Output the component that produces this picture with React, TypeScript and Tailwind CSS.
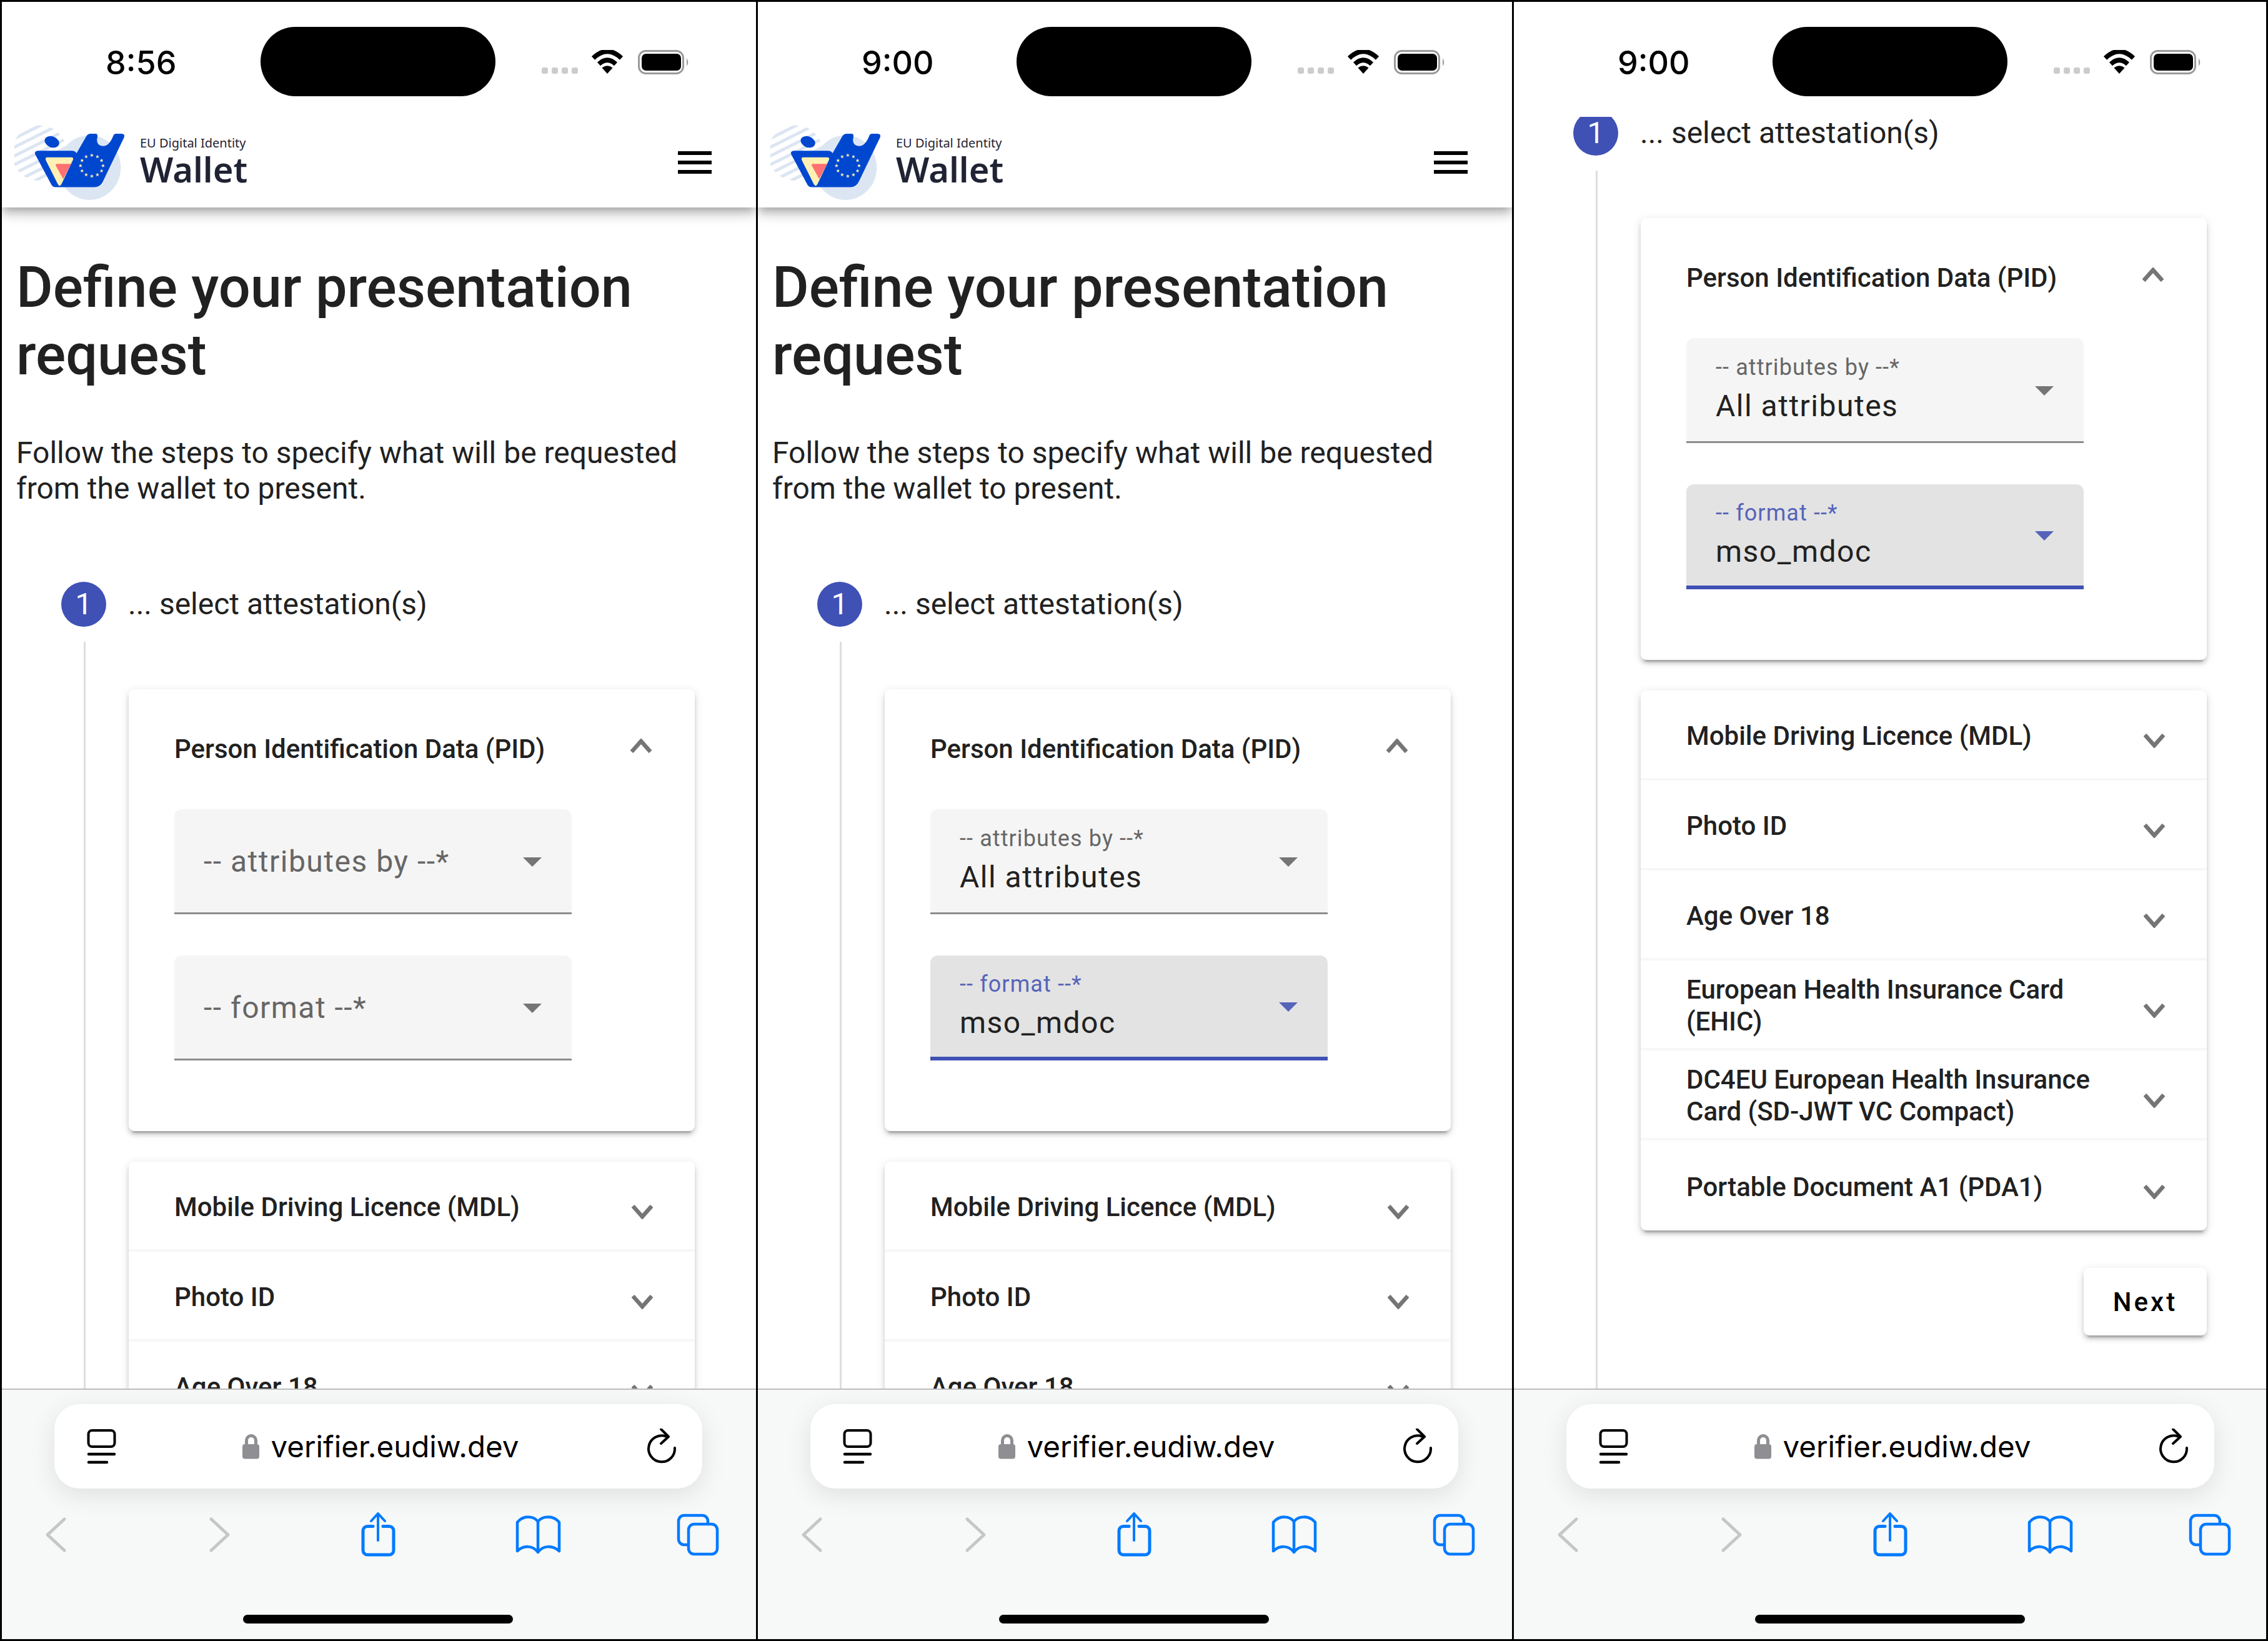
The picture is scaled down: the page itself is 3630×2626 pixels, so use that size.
import React from "react";

const stripes = [0, 1, 2, 3, 4, 5, 6, 7];

function starPoints(cx: number, cy: number, r: number) {
  const pts: string[] = [];
  for (let i = 0; i < 10; i++) {
    const rad = i % 2 === 0 ? r : r * 0.42;
    const a = -Math.PI / 2 + (i * Math.PI) / 5;
    pts.push(`${(cx + rad * Math.cos(a)).toFixed(1)},${(cy + rad * Math.sin(a)).toFixed(1)}`);
  }
  return pts.join(" ");
}

function Logo() {
  const id = React.useId();
  return (
    <svg width="177" height="122" viewBox="70 85 530 365" className="flex-none">
      <defs>
        <clipPath id={id}>
          <circle cx="190" cy="225" r="133" />
        </clipPath>
      </defs>
      <g clipPath={`url(#${id})`} stroke="#dce5f2" strokeWidth="15">
        {stripes.map((i) => (
          <line key={i} x1="40" x2="340" y1={170 + i * 42} y2={20 + i * 42} />
        ))}
      </g>
      <ellipse cx="430" cy="295" rx="150" ry="155" fill="#dce6f3" />
      <ellipse cx="250" cy="172" rx="36" ry="26" transform="rotate(22 250 172)" fill="#0047d0" />
      <path
        d="M182 214 H345 Q362 214 368 226 L415 145 Q422 133 436 133 H462 Q472 135 466 160 Q464 190 495 192 Q525 192 545 140 Q548 133 558 133 H585 Q602 135 595 152 L495 360 Q482 389 452 389 H268 Q252 389 245 372 L170 232 Q164 216 182 214 Z"
        fill="#0047d0"
      />
      <path d="M228 246 H342 Q356 246 350 260 L296 374 Q287 390 278 374 L222 262 Q215 246 228 246 Z" fill="#fff0b3" />
      <path d="M275 277 H342 L304 350 L268 285 Q266 277 275 277 Z" fill="#ff7072" />
      {Array.from({ length: 12 }).map((_, i) => {
        const a = (i * Math.PI) / 6;
        return <polygon key={i} points={starPoints(441 + 54 * Math.cos(a), 286 + 50 * Math.sin(a), 9.5)} fill="#fff0b3" />;
      })}
    </svg>
  );
}

function StatusIcons() {
  return (
    <div className="flex items-start ml-[74px] h-[111px]">
      <div className="flex gap-[6px] mt-[65px]">
        {[0, 1, 2, 3].map((i) => (
          <div key={i} className="w-[10px] h-[10px] rounded-[3px] bg-[#cccccc]" />
        ))}
      </div>
      <svg width="54" height="40" viewBox="945 80 54 40" className="ml-[20px] mt-[37px]">
        <path d="M949.5 93 Q972 71.5 994.5 93" fill="none" stroke="#000" strokeWidth="7.5" />
        <path d="M958.5 102.5 Q972 90 985.5 102.5" fill="none" stroke="#000" strokeWidth="7.5" />
        <path d="M972 118 L963.5 108.5 Q972 102 980.5 108.5 Z" fill="#000" />
      </svg>
      <svg width="84" height="42" viewBox="1019 79 84 42" className="ml-[21px] mt-[36px]">
        <rect x="1021.5" y="81.5" width="71" height="36" rx="11" fill="none" stroke="#9a9a9a" strokeWidth="3" />
        <rect x="1026" y="86" width="63" height="27" rx="7" fill="#000" />
        <path d="M1098 93 Q1102.500 99.500 1098 106 Z" fill="#9a9a9a" />
      </svg>
    </div>
  );
}

function StatusBar({ time }: { time: string }) {
  return (
    <div className="flex-none h-[184px] bg-white flex items-start pt-[40px] pl-[166px] relative z-20">
      <div className="w-[248px] h-[111px] flex items-center pt-[4px] font-[Inter,sans-serif] font-medium text-[52px] leading-none text-black">
        {time}
      </div>
      <div className="w-[376px] h-[111px] rounded-[56px] bg-black" />
      <StatusIcons />
    </div>
  );
}

function AppHeader() {
  return (
    <div className="flex-none h-[145px] bg-white flex items-start pl-[20px] pr-[71px] relative z-10 shadow-[0_6px_12px_-3px_rgba(0,0,0,0.2),0_12px_15px_0_rgba(0,0,0,0.14),0_3px_30px_0_rgba(0,0,0,0.12)]">
      <div className="mt-[11px]">
        <Logo />
      </div>
      <div className="ml-[24px] mt-[30px] flex flex-col text-[#1f2333] font-['Noto_Sans',sans-serif]">
        <span className="text-[20px] leading-[24px] whitespace-nowrap">EU Digital Identity</span>
        <span className="text-[56px] leading-[60px] font-semibold -mt-[1px]">Wallet</span>
      </div>
      <div className="ml-auto mt-[55px] flex flex-col gap-[9px]">
        <div className="w-[54px] h-[6px] bg-black" />
        <div className="w-[54px] h-[6px] bg-black" />
        <div className="w-[54px] h-[6px] bg-black" />
      </div>
    </div>
  );
}

function Chevron({ up }: { up?: boolean }) {
  return (
    <svg width="34" height="23" viewBox="0 0 34 23" className="flex-none">
      <polyline
        points={up ? "2,21 17,4 32,21" : "2,2 17,19 32,2"}
        fill="none"
        stroke="#757575"
        strokeWidth="6.500"
      />
    </svg>
  );
}

function Caret({ focused }: { focused?: boolean }) {
  return (
    <svg width="30" height="15" viewBox="0 0 30 15" className="flex-none mt-[3px]">
      <polygon points="0,0 30,0 15,15" fill={focused ? "#5564b9" : "#757575"} />
    </svg>
  );
}

function SelectField({ label, value, focused }: { label: string; value?: string; focused?: boolean }) {
  const box = focused ? "bg-[#e3e3e3] border-b-[6px] border-[#3f51b5]" : "bg-[#f5f5f5] border-b-[3px] border-[#8c8c8c]";
  return (
    <div className={`w-[636px] h-[168px] rounded-t-[12px] flex items-center justify-between pl-[47px] pr-[48px] ${box}`}>
      {value ? (
        <div className="flex flex-col gap-[9px]">
          <span className={`text-[36px] leading-[44px] tracking-[1.1px] ${focused ? "text-[#5564b9]" : "text-[#666666]"}`}>{label}</span>
          <span className="text-[48px] leading-[62px] tracking-[1.5px] text-[#212121]">{value}</span>
        </div>
      ) : (
        <span className="text-[48px] leading-[62px] tracking-[1.5px] text-[#666666] pt-[3px]">{label}</span>
      )}
      <Caret focused={focused} />
    </div>
  );
}

const rowTitles = [
  "Mobile Driving Licence (MDL)",
  "Photo ID",
  "Age Over 18",
  "European Health Insurance Card (EHIC)",
  "DC4EU European Health Insurance Card (SD-JWT VC Compact)",
  "Portable Document A1 (PDA1)",
];

const cardShadow = "shadow-[0_9px_3px_-6px_rgba(0,0,0,0.2),0_6px_6px_0_rgba(0,0,0,0.14),0_3px_15px_0_rgba(0,0,0,0.12)]";

function Stepper({ filled }: { filled: boolean }) {
  return (
    <div className="font-[Roboto,sans-serif]">
      <div className="flex items-center ml-[95px] h-[72px]">
        <div className="w-[72px] h-[72px] rounded-full bg-[#3f51b5] text-white flex items-center justify-center text-[48px] leading-none">1</div>
        <span className="ml-[35px] text-[48px] leading-none text-[#212121]">... select attestation(s)</span>
      </div>
      <div className="ml-[131px] mt-[24px] pl-[69px] pt-[76px] pb-[100px] border-l-[3px] border-[#dddddd] w-[978px]">
        <div className={`w-[906px] h-[707px] rounded-[9px] bg-white pl-[73px] ${cardShadow}`}>
          <div className="h-[192px] flex items-center justify-between pr-[69px] pb-[2px]">
            <span className="text-[42px] font-medium text-[#212121] leading-[51px]">Person Identification Data (PID)</span>
            <div className="-mt-[10px]">
              <Chevron up />
            </div>
          </div>
          <SelectField label="-- attributes by --*" value={filled ? "All attributes" : undefined} />
          <div className="h-[66px]" />
          <SelectField label="-- format --*" value={filled ? "mso_mdoc" : undefined} focused={filled} />
        </div>
        <div className={`w-[906px] mt-[49px] rounded-[9px] bg-white ${cardShadow}`}>
          {rowTitles.map((t, i) => (
            <div
              key={t}
              className={`h-[144px] flex items-center justify-between pl-[73px] pr-[67px] pt-[4px] ${i < rowTitles.length - 1 ? "border-b-[4px] border-[#f7f7f7]" : ""}`}
            >
              <span className="w-[690px] text-[42px] font-medium text-[#212121] leading-[51px]">{t}</span>
              <div className="mt-[16px]">
                <Chevron />
              </div>
            </div>
          ))}
        </div>
        <div className="flex justify-end mt-[60px]">
          <div className={`w-[197px] h-[108px] rounded-[9px] bg-white flex items-center justify-center text-[42px] font-medium tracking-[4px] text-black ${cardShadow}`}>
            Next
          </div>
        </div>
      </div>
    </div>
  );
}

function UrlBar() {
  return (
    <div className="ml-[84px] mt-[23px] w-[1037px] h-[135px] rounded-[40px] bg-white flex items-center pl-[52px] pr-[40px] shadow-[0_10px_40px_rgba(0,0,0,0.1)]">
      <svg width="48" height="58" viewBox="138 2286 48 58" className="flex-none">
        <rect x="140.500" y="2289" width="42" height="26" rx="6" fill="none" stroke="#000" strokeWidth="4" />
        <line x1="141" y1="2327" x2="182" y2="2327" stroke="#000" strokeWidth="4.500" strokeLinecap="round" />
        <line x1="141" y1="2340" x2="170" y2="2340" stroke="#000" strokeWidth="4.500" strokeLinecap="round" />
      </svg>
      <div className="flex-1 flex items-center justify-center pr-[3px]">
        <svg width="28" height="40" viewBox="388 2293 28 40" className="flex-none">
          <path d="M394.500 2311 V2303 a7.500 7.500 0 0 1 15 0 V2311" fill="none" stroke="#8e8e93" strokeWidth="5" />
          <rect x="388" y="2309" width="27" height="23.500" rx="4" fill="#8e8e93" />
        </svg>
        <span className="ml-[18px] font-[Inter,sans-serif] text-[47.500px] leading-none text-black">verifier.eudiw.dev</span>
      </div>
      <svg width="50" height="58" viewBox="1033 2284 50 58" className="flex-none">
        <path d="M1065 2296.500 A21 21 0 1 0 1079 2315" fill="none" stroke="#000" strokeWidth="4" strokeLinecap="round" />
        <polyline points="1057,2285 1069,2297 1057,2308" fill="none" stroke="#000" strokeWidth="4" strokeLinecap="round" strokeLinejoin="round" />
      </svg>
    </div>
  );
}

function NavIcons() {
  return (
    <div className="flex items-start mt-[37px] h-[70px] text-[#007aff]">
      <svg width="40" height="70" viewBox="70 2419 40 70" className="flex-none ml-[67px]">
        <polyline points="103,2431 76,2456 103,2481" fill="none" stroke="#c6c6c6" strokeWidth="5" strokeLinecap="round" strokeLinejoin="round" />
      </svg>
      <svg width="38" height="70" viewBox="334 2419 38 70" className="flex-none ml-[224px]">
        <polyline points="338,2431 365,2456 338,2481" fill="none" stroke="#c6c6c6" strokeWidth="5" strokeLinecap="round" strokeLinejoin="round" />
      </svg>
      <svg width="62" height="72" viewBox="575 2418 62 72" className="flex-none ml-[203px]">
        <path d="M597 2441.500 H588 a7 7 0 0 0 -7 7 V2480 a7 7 0 0 0 7 7 H623 a7 7 0 0 0 7 -7 V2448.500 a7 7 0 0 0 -7 -7 H613" fill="none" stroke="currentColor" strokeWidth="5" strokeLinecap="round" />
        <path d="M605 2464 V2421 M594 2433 L605 2421 L616 2433" fill="none" stroke="currentColor" strokeWidth="4" strokeLinecap="round" strokeLinejoin="round" />
      </svg>
      <svg width="77" height="70" viewBox="823 2419 77 70" className="flex-none ml-[186px]">
        <path d="M861 2435 C855 2426 838 2424 828 2436 V2482 C838 2473 852 2472 861 2484 C870 2472 884 2473 895 2482 V2436 C885 2424 867 2426 861 2435 V2484" fill="none" stroke="currentColor" strokeWidth="4.500" strokeLinejoin="round" />
      </svg>
      <svg width="70" height="72" viewBox="1082 2419 70 72" className="flex-none ml-[182px]">
        <path d="M1100 2472 H1095 a9 9 0 0 1 -9 -9 V2434 a9 9 0 0 1 9 -9 H1124 a9 9 0 0 1 9 9 V2439" fill="none" stroke="currentColor" strokeWidth="4.500" />
        <rect x="1102" y="2439" width="46" height="48" rx="9" fill="none" stroke="currentColor" strokeWidth="4.500" />
      </svg>
    </div>
  );
}

function BrowserBar() {
  return (
    <div className="flex-none h-[401px] bg-[#f7f8f8] border-t-[2px] border-[#bdbdbd] relative z-10 flex flex-col">
      <UrlBar />
      <NavIcons />
      <div className="ml-[386px] mt-[95px] w-[432px] h-[14px] rounded-full bg-black" />
    </div>
  );
}

function Phone({ time, step }: { time: string; step: "empty" | "filled" | "scrolled" }) {
  const scrolled = step === "scrolled";
  return (
    <div className="w-[1210px] h-full flex-none flex flex-col border-l-[3px] border-black bg-white overflow-hidden last:border-r-[3px]">
      <StatusBar time={time} />
      {scrolled ? null : <AppHeader />}
      <div className="flex-1 min-h-0 overflow-hidden bg-white">
        {scrolled ? (
          <div className="-mt-[10px]">
            <Stepper filled />
          </div>
        ) : (
          <div>
            <div className="pl-[23px] pt-[75px] font-[Roboto,sans-serif] text-[#212121]">
              <h1 className="text-[90px] leading-[108px] font-medium">
                Define your presentation
                <br />
                request
              </h1>
              <p className="mt-[73px] text-[48px] leading-[57px]">
                Follow the steps to specify what will be requested
                <br />
                from the wallet to present.
              </p>
            </div>
            <div className="mt-[121px]">
              <Stepper filled={step === "filled"} />
            </div>
          </div>
        )}
      </div>
      <BrowserBar />
    </div>
  );
}

export default function App() {
  return (
    <div className="w-[3630px] h-[2626px] flex border-y-[3px] border-black bg-white overflow-hidden">
      <Phone time="8:56" step="empty" />
      <Phone time="9:00" step="filled" />
      <Phone time="9:00" step="scrolled" />
    </div>
  );
}
